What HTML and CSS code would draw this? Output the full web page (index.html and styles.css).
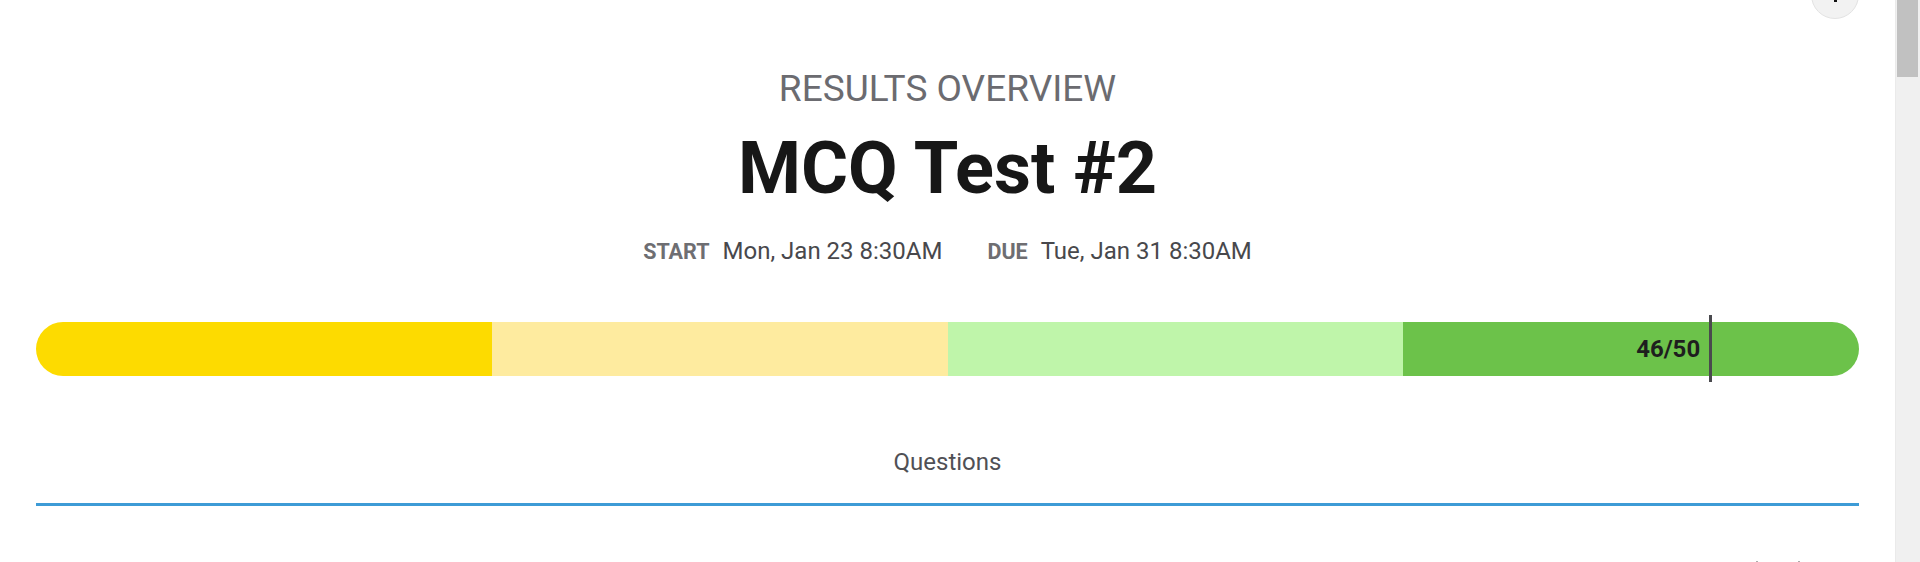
FILE: index.html
```html
<!DOCTYPE html>
<html lang="en">
<head>
<meta charset="utf-8">
<title>Results Overview</title>
<link rel="stylesheet" href="styles.css">
</head>
<body>
<div class="viewport">
  <main class="page">
    <header class="header">
      <button class="kebab" aria-label="More options">
        <span class="dot"></span><span class="dot"></span><span class="dot"></span>
      </button>
      <div class="eyebrow">RESULTS OVERVIEW</div>
      <h1 class="title">MCQ Test #2</h1>
      <div class="meta">
        <span class="meta-item"><span class="meta-label">START</span><span class="meta-value">Mon, Jan 23 8:30AM</span></span>
        <span class="meta-item"><span class="meta-label">DUE</span><span class="meta-value">Tue, Jan 31 8:30AM</span></span>
      </div>
    </header>

    <section class="score">
      <div class="bar">
        <div class="seg seg-1"></div>
        <div class="seg seg-2"></div>
        <div class="seg seg-3"></div>
        <div class="seg seg-4"></div>
      </div>
      <div class="marker" style="left:92%">
        <span class="marker-label">46/50</span>
      </div>
    </section>

    <nav class="tabs">
      <div class="tab tab-active">Questions</div>
    </nav>

    <section class="content">
      <div class="toolbar">
        <svg class="tool" width="14" height="14" viewBox="0 0 14 14"><path d="M7 0v14" stroke="#8a8a8a" stroke-width="1.4"/></svg>
        <svg class="tool" width="14" height="14" viewBox="0 0 14 14"><path d="M7 0v14" stroke="#8a8a8a" stroke-width="1.4"/></svg>
      </div>
    </section>
  </main>
  <aside class="scrollbar" aria-hidden="true">
    <div class="thumb"></div>
  </aside>
</div>
</body>
</html>
```

FILE: styles.css
```css
html, body {
  margin: 0;
  padding: 0;
  background: #ffffff;
  height: 100%;
  overflow: hidden;
}

body {
  font-family: Roboto, "Liberation Sans", Arial, sans-serif;
  color: #333;
}

.viewport {
  display: flex;
  height: 100vh;
}

.page {
  flex: 1 1 auto;
  min-width: 0;
  padding: 0 36px;
  box-sizing: border-box;
  overflow: hidden;
}

.scrollbar {
  flex: 0 0 25px;
  background: #f0f0f0;
  border-left: 1px solid #eaeaea;
  box-sizing: border-box;
  padding: 0 2px 0 1px;
}
.thumb {
  height: 77px;
  background: #c1c1c1;
}

.header {
  position: relative;
  text-align: center;
  padding-top: 67px;
}

.kebab {
  position: absolute;
  top: -29px;
  right: 0;
  width: 48px;
  height: 48px;
  border-radius: 50%;
  border: 1px solid #e3e3e3;
  background: #f2f2f2;
  padding: 0;
  display: flex;
  flex-direction: column;
  align-items: center;
  justify-content: center;
  gap: 2.5px;
}
.kebab .dot {
  width: 3px;
  height: 3px;
  background: #111;
}

.eyebrow {
  font-size: 37px;
  line-height: 43px;
  color: #6b6b70;
  font-weight: 400;
}

.title {
  margin: 17px 0 0;
  font-size: 72px;
  line-height: 84px;
  font-weight: 700;
  color: #171717;
}

.meta {
  margin-top: 26px;
  display: flex;
  justify-content: center;
  gap: 45px;
  line-height: 28px;
}
.meta-item {
  display: flex;
  align-items: baseline;
  gap: 13px;
}
.meta-label {
  font-size: 21.5px;
  font-weight: 700;
  color: #6e6e72;
}
.meta-value {
  font-size: 24px;
  color: #48484c;
}

.score {
  position: relative;
  margin-top: 56px;
}

.bar {
  display: flex;
  height: 54px;
  border-radius: 27px;
  overflow: hidden;
}
.seg {
  flex: 1 1 0;
}
.seg-1 { background: #fddb00; }
.seg-2 { background: #feeb9f; }
.seg-3 { background: #bff5aa; }
.seg-4 { background: #6cc24a; }

.marker {
  position: absolute;
  top: -7px;
  bottom: -6px;
  width: 3px;
  margin-left: -4px;
  background: #4a4a4e;
}
.marker-label {
  position: absolute;
  right: 12px;
  top: 50%;
  transform: translateY(-50%);
  font-size: 24px;
  font-weight: 700;
  color: #1e1e1e;
  white-space: nowrap;
}

.tabs {
  margin-top: 72px;
  display: flex;
  border-bottom: 3px solid #3d9bd6;
}
.tab {
  flex: 1;
  text-align: center;
  font-size: 24px;
  line-height: 28px;
  padding-bottom: 27px;
  color: #505055;
}

.content {
  padding-top: 55px;
}
.toolbar {
  display: flex;
  justify-content: flex-end;
  gap: 28px;
  padding-right: 53px;
}
.tool {
  display: block;
}
```
